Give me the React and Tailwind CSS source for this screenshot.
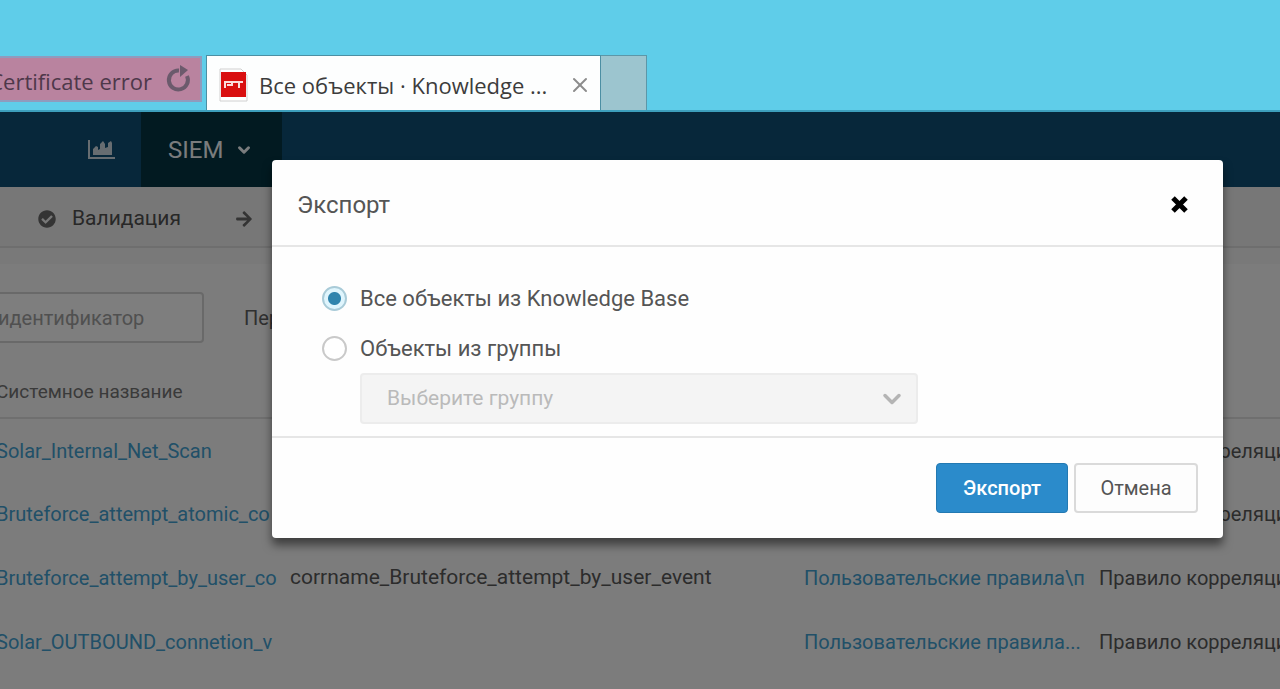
import React, { useState } from "react";
import { FaArrowRight, FaCheckCircle } from "react-icons/fa";
import { ChevronDown, X } from "lucide-react";

const rows = [
  { name: "Solar_Internal_Net_Scan", description: "", group: "", type: "Правило корреляции" },
  { name: "Bruteforce_attempt_atomic_co", description: "", group: "", type: "Правило корреляции" },
  {
    name: "Bruteforce_attempt_by_user_co",
    description: "corrname_Bruteforce_attempt_by_user_event",
    group: "Пользовательские правила\\п",
    type: "Правило корреляции",
  },
  { name: "Solar_OUTBOUND_connetion_v", description: "", group: "Пользовательские правила...", type: "Правило корреляции" },
];

function BrowserBar() {
  return (
    <header className="flex h-[112px] items-end overflow-hidden border-b-2 border-[#3d9fbc] bg-[#5fcde9] font-['Open_Sans','Noto_Sans',sans-serif] text-[22px] text-[#3c3c3c]">
      <div className="mb-2 flex h-[46px] w-[202px] shrink-0 items-center justify-end gap-3 border-2 border-l-0 border-[#8f9bbd] bg-[#b9839f] pt-1 pr-2 text-[#4e384a]">
        <span className="whitespace-nowrap">Certificate error</span>
        <button type="button" aria-label="Refresh" className="pb-1 text-[#6b5a6c]">
          <svg width="28" height="30" viewBox="0 0 28 30" fill="none" stroke="currentColor" strokeWidth="4">
            <path d="M15 6.500A9.500 9.500 0 1 0 23 12" />
            <path d="M16 1v12l8-7z" fill="currentColor" stroke="none" />
          </svg>
        </button>
      </div>
      <div className="ml-1 flex h-[55px] w-[395px] shrink-0 items-center border border-b-0 border-[#4c8fa3] bg-[#fdfefe] pt-1 pl-3">
        <svg width="30" height="34" viewBox="0 0 30 34" className="shrink-0">
          <path d="M1 1h21l6 6v26H1z" fill="#fff" stroke="#d0d0d0" />
          <path d="M2 4h25v25H2z" fill="#d90f10" />
          <path d="M6 20v-6h7v3H8M14 14h10M20 14v6" fill="none" stroke="#fbdcdc" strokeWidth="2" />
        </svg>
        <span className="ml-[10px] whitespace-nowrap">Все объекты · Knowledge ...</span>
        <button type="button" aria-label="Close tab" className="mr-2 ml-auto text-[#8c8c8c]">
          <X size={24} strokeWidth={2} />
        </button>
      </div>
      <button type="button" aria-label="New tab" className="h-[55px] w-[46px] shrink-0 border border-b-0 border-l-0 border-[#5c97a8] bg-[#9cc5cf]" />
    </header>
  );
}

function NavBar() {
  return (
    <nav className="flex h-[75px] shrink-0 bg-[#0e4e74] text-[24px] text-[#f4f8fa]">
      <a href="#dashboards" aria-label="Dashboards" className="flex w-[141px] items-center justify-end pr-[26px] text-[#cfdbe2]">
        <svg width="28" height="20" viewBox="0 0 28 20" fill="currentColor">
          <path d="M1 0h2v17h25v2H1z" />
          <path d="M6 15V9l3-3 2 1v3l2-1V4l3-3 2 3v4l3-1V3l3-2 1 2v12z" />
        </svg>
      </a>
      <button type="button" className="flex w-[141px] items-center gap-3 bg-[#043442] pl-[27px]">
        SIEM
        <ChevronDown size={18} strokeWidth={4} />
      </button>
    </nav>
  );
}

function Toolbar() {
  return (
    <div className="flex h-[61px] shrink-0 items-center border-b-2 border-[#dcdcdc] bg-[#eeeeee] pt-1 pl-[38px] text-[21px] text-[#505050]">
      <button type="button" className="flex items-center gap-4">
        <FaCheckCircle size={18} className="text-[#686868]" />
        Валидация
      </button>
      <button type="button" aria-label="Next" className="ml-[54px] text-[#686868]">
        <FaArrowRight size={18} />
      </button>
    </div>
  );
}

function Objects() {
  return (
    <main className="flex-1 overflow-hidden">
      <div className="h-4 bg-[#f2f2f2]" />
      <div className="mt-7 flex items-center gap-10">
        <input
          type="text"
          aria-label="Идентификатор"
          placeholder="идентификатор"
          className="-ml-1 h-[51px] w-[208px] rounded-sm border-2 border-[#d2d2d2] bg-[#fcfcfc] px-0 text-[20px] placeholder:text-[#a0a0a0]"
        />
        <span className="text-[20px] text-[#606060]">Период</span>
      </div>
      <table className="mt-[25px] -ml-1 w-[calc(100%+4px)] table-fixed border-collapse text-left text-[20px] text-[#585858]">
        <colgroup>
          <col className="w-[294px]" />
          <col className="w-[514px]" />
          <col className="w-[295px]" />
          <col />
        </colgroup>
        <thead>
          <tr className="h-[50px] border-b-2 border-[#dedede] text-[19px] text-[#747474]">
            <th className="p-0 font-normal">Системное название</th>
            <th />
            <th />
            <th />
          </tr>
        </thead>
        <tbody>
          {rows.map((row) => (
            <tr key={row.name} className="h-16">
              <td className="p-0 pr-3">
                <a href={`#${row.name}`} className="block overflow-hidden whitespace-nowrap text-[#42a0d0]">{row.name}</a>
              </td>
              <td className="p-0 text-[21px] whitespace-nowrap">{row.description}</td>
              <td className="p-0 pr-3">
                <a href={`#group-${row.name}`} className="block overflow-hidden whitespace-nowrap text-[#42a0d0]">{row.group}</a>
              </td>
              <td className="overflow-hidden p-0 whitespace-nowrap">{row.type}</td>
            </tr>
          ))}
        </tbody>
      </table>
    </main>
  );
}

function ExportModal() {
  const [source, setSource] = useState("all");
  const radio =
    "size-[25px] shrink-0 appearance-none rounded-full border-2 border-[#c9c9c9] bg-white checked:border-[#a9cbd8] checked:bg-[radial-gradient(circle,#2f84ad_6px,#dff5fd_7px)]";

  return (
    <div className="absolute inset-0 flex items-start bg-black/50 pt-12 pr-[57px] pl-[272px]">
      <form
        role="dialog"
        aria-labelledby="export-title"
        onSubmit={(e) => e.preventDefault()}
        className="flex-1 rounded-sm bg-[#fefefe] text-[20px] text-[#555555] shadow-[0_7px_10px_rgba(0,0,0,0.5)]"
      >
        <div className="flex h-[87px] items-center justify-between border-b-2 border-[#e6e6e6] pt-1 pr-[35px] pl-[25px]">
          <h2 id="export-title" className="text-[24px]">Экспорт</h2>
          <button type="button" aria-label="Закрыть" className="text-black">
            <svg width="17" height="17" viewBox="0 0 17 17" fill="none" stroke="currentColor" strokeWidth="5">
              <path d="M2 2l13 13M15 2L2 15" />
            </svg>
          </button>
        </div>

        <div className="border-b-2 border-[#e6e6e6] pt-[36px] pr-[305px] pb-3 pl-[50px]">
          <label className="flex h-[30px] items-center gap-[13px] text-[22px]">
            <input type="radio" name="source" checked={source === "all"} onChange={() => setSource("all")} className={radio} />
            Все объекты из Knowledge Base
          </label>
          <label className="mt-5 flex h-[30px] items-center gap-[13px] text-[22px]">
            <input type="radio" name="source" checked={source === "group"} onChange={() => setSource("group")} className={radio} />
            Объекты из группы
          </label>
          <div className="relative mt-[10px] ml-[38px]">
            <select
              aria-label="Выберите группу"
              disabled={source !== "group"}
              className="h-[51px] w-full appearance-none rounded-sm border-2 border-[#ececec] bg-[#f4f4f4] px-[25px] text-[21px] text-[#bababa] opacity-100"
            >
              <option>Выберите группу</option>
            </select>
            <ChevronDown size={28} strokeWidth={3} className="pointer-events-none absolute top-3 right-3 text-[#b4b4b4]" />
          </div>
        </div>

        <div className="flex justify-end gap-[6px] px-[25px] py-[25px]">
          <button type="submit" className="h-[50px] w-[132px] rounded-sm border border-[#2379b2] bg-[#2b8bcb] font-medium text-white">
            Экспорт
          </button>
          <button type="button" className="h-[50px] w-[124px] rounded-sm border-2 border-[#dadada] bg-[#fdfdfd]">
            Отмена
          </button>
        </div>
      </form>
    </div>
  );
}

export default function App() {
  return (
    <div className="flex h-screen flex-col overflow-hidden font-[Roboto,sans-serif]">
      <BrowserBar />
      <div className="relative flex flex-1 flex-col overflow-hidden bg-[#f9f9f9]">
        <NavBar />
        <Toolbar />
        <Objects />
        <ExportModal />
      </div>
    </div>
  );
}
